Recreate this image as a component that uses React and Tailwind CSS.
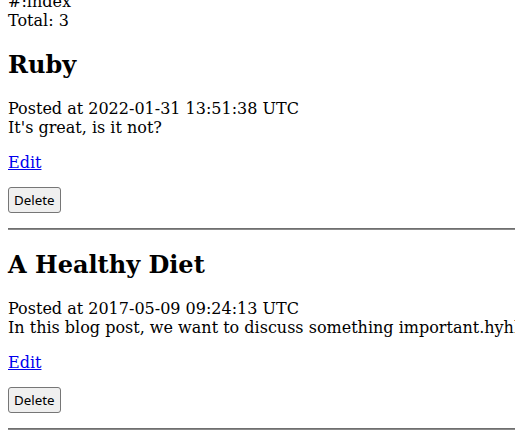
import React from "react";

const posts = [
	{ id: 1, title: "Ruby", postedAt: "2022-01-31 13:51:38 UTC", body: "It's great, is it not?" },
	{ id: 2, title: "A Healthy Diet", postedAt: "2017-05-09 09:24:13 UTC", body: "In this blog post, we want to discuss something important.hyhhhhhhhhhh" },
];

function Post({ post }) {
	return (
		<article>
			<h2 className="mt-[20px] text-[24px] font-bold leading-[normal]">{post.title}</h2>
			<p className="mt-[20px] whitespace-nowrap">
				Posted at {post.postedAt}
				<br />
				{post.body}
			</p>
			<p className="mt-[16px]">
				<a href="#" className="text-[#0000ee] underline">
					Edit
				</a>
			</p>
			<form className="mt-[15px]" onSubmit={(e) => e.preventDefault()}>
				<button
					type="submit"
					className="rounded-[3px] border border-[#767676] bg-[#efefef] px-[5px] py-[3px] font-['Noto_Sans',sans-serif] text-[13.33px] leading-[normal] text-black">
					Delete
				</button>
			</form>
			<hr className="mt-[15px] h-0 border-t border-b border-t-[#6f6f6f] border-b-[#8a8a8a]" />
		</article>
	);
}

export default function App() {
	return (
		<div className="h-[435px] overflow-hidden bg-white">
			<div className="ml-2 mt-[-8px] w-[700px] font-['DejaVu_Serif',serif] text-[16px] leading-[normal] text-black">
				<div>#:index</div>
				<div>Total: {3}</div>
				{posts.map((p) => (
					<Post key={p.id} post={p} />
				))}
			</div>
		</div>
	);
}
